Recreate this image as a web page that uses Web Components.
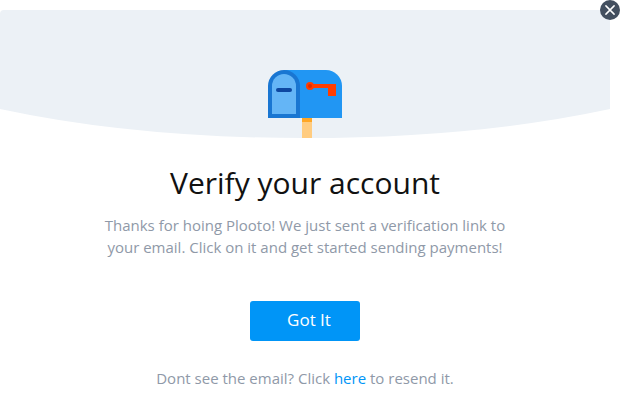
<!DOCTYPE html>
<html lang="en"><head><meta charset="utf-8"><title>Verify your account</title>
<style>body{margin:0;background:#fff;font-family:"Open Sans","Noto Sans",sans-serif}</style></head><body>
<verify-dialog></verify-dialog>
<script>
class MailboxIcon extends HTMLElement{constructor(){super();this.attachShadow({mode:'open'}).innerHTML=`<style>:host{display:block;width:74px;height:68px}svg{display:block}</style>
<svg width="74" height="68" viewBox="0 0 74 68"><path fill="#ffcc80" d="M34 48h10v20H34z"/><path fill="#ffa726" d="M34 48h10v4H34z"/><path fill="#2196f3" d="M16 0h42a16 16 0 0 1 16 16v32H16z"/><path fill="#1976d2" d="M0 48V16a16 16 0 0 1 32 0v32z"/><path fill="#64b5f6" d="M4 44V16a12 12 0 0 1 24 0v28z"/><rect x="8" y="18" width="16" height="4" rx="2" fill="#0d47a1"/><path fill="#ff3d00" d="M42 14h26v12h-8v-8H42z"/><circle cx="42" cy="16" r="4" fill="#ff3d00"/><circle cx="42" cy="16" r="2" fill="#dd2c00"/></svg>`}}
customElements.define('mailbox-icon',MailboxIcon);
class CloseButton extends HTMLElement{constructor(){super();this.attachShadow({mode:'open'}).innerHTML=`<style>:host{display:block;width:20px;height:20px}svg{display:block}</style><svg width="20" height="20"><circle cx="10" cy="10" r="10" fill="#434f5f"/><path d="M5.9 5.9l8.2 8.2m0-8.2l-8.2 8.2" stroke="#fff" stroke-width="1.5" stroke-linecap="round"/></svg>`}}
customElements.define('close-button',CloseButton);
class DialogHero extends HTMLElement{constructor(){super();this.attachShadow({mode:'open'}).innerHTML=`<style>:host{display:grid;width:610px;height:128px}svg,.art{grid-area:1/1}svg{display:block}.art{padding:60px 0 0 268px}</style><svg width="610" height="128"><path fill="#ecf1f6" d="M0 4Q0 0 4 0H610V99Q475 128 305 128T0 99Z"/></svg><div class="art"><slot></slot></div>`}}
customElements.define('dialog-hero',DialogHero);
class PrimaryButton extends HTMLElement{constructor(){super();this.attachShadow({mode:'open'}).innerHTML=`<style>:host{display:block;width:110px;height:40px}button{width:110px;height:40px;border:0;border-radius:3px;background:#0095f7;color:#fff;font:17px/24px "Open Sans",sans-serif;padding:0 0 2px 8px}</style><button><slot></slot></button>`}}
customElements.define('primary-button',PrimaryButton);
class VerifyDialog extends HTMLElement{constructor(){super();this.attachShadow({mode:'open'}).innerHTML=`<style>:host{display:block;width:620px;height:418px;position:relative;overflow:hidden}.card{padding-top:10px;width:610px;display:flex;flex-direction:column;align-items:center}close-button{position:absolute;right:0;top:0}h1{margin:25px 0 0;font-size:30px;line-height:40px;font-weight:400;color:#111}p{margin:0;font-size:15px;line-height:22px;color:#8f99a8;text-align:center;white-space:nowrap}.copy{margin-top:11px}primary-button{margin-top:43px}.help{margin-top:26px}a{color:#0095f7}</style>
<div class="card"><dialog-hero><mailbox-icon></mailbox-icon></dialog-hero><h1>Verify your account</h1><p class="copy">Thanks for hoing Plooto! We just sent a verification link to<br>your email. Click on it and get started sending payments!</p><primary-button>Got It</primary-button><p class="help">Dont see the email? Click <a>here</a> to resend it.</p></div><close-button></close-button>`}}
customElements.define('verify-dialog',VerifyDialog);
</script></body></html>
